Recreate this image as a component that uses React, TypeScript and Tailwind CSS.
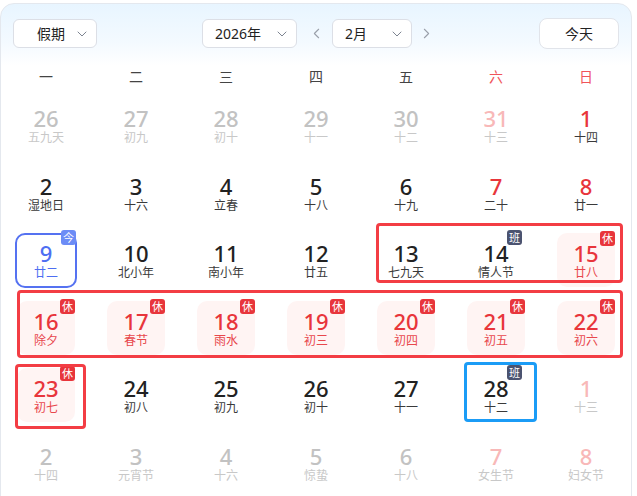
import { ChevronDown, ChevronLeft, ChevronRight } from 'lucide-react';

type Kind = 'normal' | 'weekend' | 'out' | 'outWeekend' | 'holiday' | 'today';

interface Day {
  n: number;
  lunar: string;
  kind: Kind;
  badge?: '休' | '班' | '今';
}

const weeks: Day[][] = [
  [
    { n: 26, lunar: '五九天', kind: 'out' },
    { n: 27, lunar: '初九', kind: 'out' },
    { n: 28, lunar: '初十', kind: 'out' },
    { n: 29, lunar: '十一', kind: 'out' },
    { n: 30, lunar: '十二', kind: 'out' },
    { n: 31, lunar: '十三', kind: 'outWeekend' },
    { n: 1, lunar: '十四', kind: 'weekend' },
  ],
  [
    { n: 2, lunar: '湿地日', kind: 'normal' },
    { n: 3, lunar: '十六', kind: 'normal' },
    { n: 4, lunar: '立春', kind: 'normal' },
    { n: 5, lunar: '十八', kind: 'normal' },
    { n: 6, lunar: '十九', kind: 'normal' },
    { n: 7, lunar: '二十', kind: 'weekend' },
    { n: 8, lunar: '廿一', kind: 'weekend' },
  ],
  [
    { n: 9, lunar: '廿二', kind: 'today', badge: '今' },
    { n: 10, lunar: '北小年', kind: 'normal' },
    { n: 11, lunar: '南小年', kind: 'normal' },
    { n: 12, lunar: '廿五', kind: 'normal' },
    { n: 13, lunar: '七九天', kind: 'normal' },
    { n: 14, lunar: '情人节', kind: 'normal', badge: '班' },
    { n: 15, lunar: '廿八', kind: 'holiday', badge: '休' },
  ],
  [
    { n: 16, lunar: '除夕', kind: 'holiday', badge: '休' },
    { n: 17, lunar: '春节', kind: 'holiday', badge: '休' },
    { n: 18, lunar: '雨水', kind: 'holiday', badge: '休' },
    { n: 19, lunar: '初三', kind: 'holiday', badge: '休' },
    { n: 20, lunar: '初四', kind: 'holiday', badge: '休' },
    { n: 21, lunar: '初五', kind: 'holiday', badge: '休' },
    { n: 22, lunar: '初六', kind: 'holiday', badge: '休' },
  ],
  [
    { n: 23, lunar: '初七', kind: 'holiday', badge: '休' },
    { n: 24, lunar: '初八', kind: 'normal' },
    { n: 25, lunar: '初九', kind: 'normal' },
    { n: 26, lunar: '初十', kind: 'normal' },
    { n: 27, lunar: '十一', kind: 'normal' },
    { n: 28, lunar: '十二', kind: 'normal', badge: '班' },
    { n: 1, lunar: '十三', kind: 'outWeekend' },
  ],
  [
    { n: 2, lunar: '十四', kind: 'out' },
    { n: 3, lunar: '元宵节', kind: 'out' },
    { n: 4, lunar: '十六', kind: 'out' },
    { n: 5, lunar: '惊蛰', kind: 'out' },
    { n: 6, lunar: '十八', kind: 'out' },
    { n: 7, lunar: '女生节', kind: 'outWeekend' },
    { n: 8, lunar: '妇女节', kind: 'outWeekend' },
  ],
];

const numColor: Record<Kind, string> = {
  normal: 'text-[#222222]',
  weekend: 'text-[#e8353b]',
  out: 'text-[#c2c2c2]',
  outWeekend: 'text-[#f8b8b8]',
  holiday: 'text-[#e8353b]',
  today: 'text-[#4e6ef2]',
};

const lunarColor: Record<Kind, string> = {
  normal: 'text-[#3a3a3a]',
  weekend: 'text-[#3a3a3a]',
  out: 'text-[#c8c8c8]',
  outWeekend: 'text-[#c8c8c8]',
  holiday: 'text-[#e8474c]',
  today: 'text-[#4e6ef2]',
};

const badgeClass = {
  休: 'bg-[#e8353b] -top-[2px] right-0',
  班: 'bg-[#4b5370] -top-[3px] right-[3px]',
  今: 'bg-[#6c8cf6] -top-[5px] -right-[1px]',
};

function DayCell({ day }: { day: Day }) {
  const box =
    day.kind === 'holiday'
      ? 'w-[58px] h-[54px] rounded-[10px] bg-[#fff4f3]'
      : day.kind === 'today'
        ? 'w-[62px] h-[55px] rounded-[10px] border-2 border-[#5572f1]'
        : 'w-[58px] h-[54px]';

  return (
    <div className="flex justify-center pt-[2px]">
      <div className={`relative flex flex-col items-center ${day.kind === 'today' ? 'pt-[7px]' : 'pt-[9px]'} ${box}`}>
        <span className={`text-[22px] leading-[22px] font-medium ${numColor[day.kind]}`}>{day.n}</span>
        <span className={`mt-[1px] text-[12px] leading-[15px] ${lunarColor[day.kind]}`}>{day.lunar}</span>
        {day.badge && (
          <span
            className={`absolute w-[15px] h-[15px] rounded-[3px] text-white text-[11px] leading-[15px] text-center ${badgeClass[day.badge]}`}
          >
            {day.badge}
          </span>
        )}
      </div>
    </div>
  );
}

function Select({ label, width, textPad }: { label: string; width: string; textPad: string }) {
  return (
    <button
      className={`flex items-center justify-between h-[29px] rounded-[6px] border border-[#dcdfe6] bg-white pr-[6px] text-[14px] text-[#222] ${width} ${textPad}`}
    >
      <span>{label}</span>
      <ChevronDown className="w-[16px] h-[16px] text-[#7d8491]" strokeWidth={1.5} />
    </button>
  );
}

export default function App() {
  const weekdays = ['一', '二', '三', '四', '五', '六', '日'];

  return (
    <div
      className="w-[637px] h-[496px] overflow-hidden bg-white"
      style={{ fontFamily: "'Noto Sans', 'Noto Sans CJK SC', sans-serif" }}
    >
      <div className="mt-[3px] w-[632px] h-[540px] rounded-[14px] border border-[#e4e8ee] bg-[linear-gradient(180deg,#e8f5ff_0px,#f4faff_40px,#ffffff_62px)]">
        {/* toolbar */}
        <div className="flex items-center h-[45px] pt-[14px] pl-[12px]">
          <Select label="假期" width="w-[84px]" textPad="pl-[23px]" />
          <div className="ml-[105px]">
            <Select label="2026年" width="w-[95px]" textPad="pl-[12px]" />
          </div>
          <ChevronLeft className="ml-[11px] w-[17px] h-[17px] text-[#9aa0aa]" strokeWidth={1.5} />
          <div className="ml-[7px]">
            <Select label="2月" width="w-[80px]" textPad="pl-[12px]" />
          </div>
          <ChevronRight className="ml-[6px] w-[17px] h-[17px] text-[#9aa0aa]" strokeWidth={1.5} />
          <button className="ml-[104px] w-[80px] h-[31px] rounded-[8px] border border-[#e1e4ea] bg-white text-[14px] text-[#222]">
            今天
          </button>
        </div>

        {/* weekday header */}
        <div className="grid grid-cols-7 h-[47px] pt-[8px] items-center">
          {weekdays.map((w, i) => (
            <div
              key={w}
              className={`text-center text-[14px] ${i >= 5 ? 'text-[#f0545a]' : 'text-[#444]'}`}
            >
              {w}
            </div>
          ))}
        </div>

        {/* days */}
        <div className="relative">
          {weeks.map((week, r) => (
            <div key={r} className="grid grid-cols-7 h-[67.5px]">
              {week.map((d, c) => (
                <DayCell key={c} day={d} />
              ))}
            </div>
          ))}

          {/* range highlights */}
          <div className="absolute left-[375px] top-[127px] w-[247px] h-[60px] rounded-[4px] border-[3px] border-[#f33d44]" />
          <div className="absolute left-[16px] top-[194px] w-[606px] h-[68px] rounded-[4px] border-[3px] border-[#f33d44]" />
          <div className="absolute left-[14px] top-[268px] w-[71px] h-[65px] rounded-[4px] border-[3px] border-[#f33d44]" />
          <div className="absolute left-[463px] top-[266px] w-[73px] h-[60px] rounded-[4px] border-[3px] border-[#1b9cf6]" />
        </div>
      </div>
    </div>
  );
}
